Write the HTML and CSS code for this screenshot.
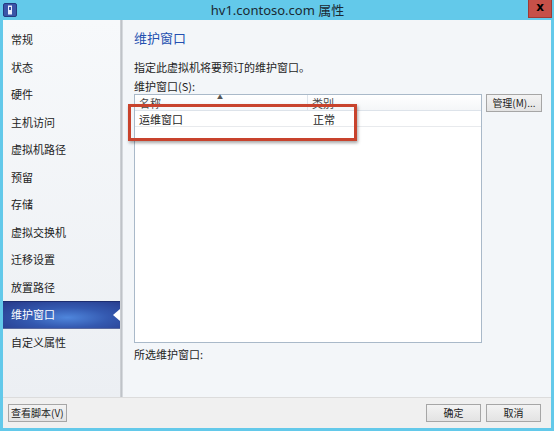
FILE: index.html
```html
<!DOCTYPE html>
<html lang="zh-CN">
<head>
  <meta charset="UTF-8" />
  <title>hv1.contoso.com 属性</title>
  <link rel="stylesheet" href="styles.css">
</head>
<body>
  <div class="window">
    <div class="titlebar">
      <svg class="app-icon" width="14" height="14" viewBox="0 0 14 14">
        <rect x="0.5" y="0.5" width="13" height="13" rx="1.5" fill="#3a55a8" stroke="#243a80" />
        <rect x="5" y="2.5" width="4" height="9" fill="#e8eefc" />
        <rect x="6" y="4" width="2" height="3" fill="#3a55a8" />
      </svg>
      <div class="title">hv1.contoso.com 属性</div>
      <div class="close">x</div>
    </div>

    <div class="main">
      <ul class="nav">
        <li>常规</li>
        <li>状态</li>
        <li>硬件</li>
        <li>主机访问</li>
        <li>虚拟机路径</li>
        <li>预留</li>
        <li>存储</li>
        <li>虚拟交换机</li>
        <li>迁移设置</li>
        <li>放置路径</li>
        <li class="active">维护窗口</li>
        <li>自定义属性</li>
      </ul>
      <div class="splitter"></div>
      <div class="content">
        <h1>维护窗口</h1>
        <p class="desc">指定此虚拟机将要预订的维护窗口。</p>
        <div class="label">维护窗口(S):</div>
        <div class="list-row">
          <div class="list">
            <div class="list-head">
              <div class="col-name">名称<span class="sort">▲</span></div>
              <div class="col-type">类别</div>
            </div>
            <div class="list-item">
              <div class="col-name">运维窗口</div>
              <div class="col-type">正常</div>
            </div>
          </div>
          <button class="btn manage">管理(M)...</button>
        </div>
        <div class="label selected">所选维护窗口:</div>
        <div class="highlight"></div>
      </div>
    </div>

    <div class="footer">
      <button class="btn">查看脚本(V)</button>
      <div class="footer-right">
        <button class="btn wide">确定</button>
        <button class="btn wide">取消</button>
      </div>
    </div>
  </div>
</body>
</html>
```

FILE: styles.css
```css
* {
  box-sizing: border-box;
}

body {
  margin: 0;
  font-family: "Noto Sans", "Noto Sans CJK SC", sans-serif;
  font-size: 11px;
  color: #1e1e1e;
}

.window {
  width: 554px;
  height: 431px;
  background: #63c9ea;
  display: flex;
  flex-direction: column;
}

.titlebar {
  height: 20px;
  display: flex;
  align-items: center;
  padding-left: 3px;
}

.app-icon {
  display: block;
}

.title {
  flex: 1;
  text-align: center;
  font-size: 13px;
  color: #1a2a33;
  padding-left: 10px;
  line-height: 20px;
}

.close {
  width: 24px;
  height: 18px;
  margin: 0 2px 2px 0;
  align-self: flex-start;
  background: #c65048;
  border: 1px solid #a03a34;
  border-top: none;
  color: #000;
  font-family: "DejaVu Sans", sans-serif;
  font-weight: bold;
  font-size: 12px;
  line-height: 15px;
  text-align: center;
}

.main {
  flex: 1;
  margin: 0 3px;
  display: flex;
  min-height: 0;
}

.nav {
  list-style: none;
  margin: 0;
  padding: 6px 0 0;
  width: 117px;
  background: linear-gradient(#f7f9fb, #eceff3);
}

.nav li {
  height: 27.5px;
  line-height: 27.5px;
  padding-left: 8px;
  font-family: "Noto Sans CJK SC", sans-serif;
  color: #222;
  position: relative;
}

.nav li.active {
  color: #fff;
  background: radial-gradient(ellipse at 55% 60%, #4f86dc 0%, #3459b0 45%, #26398a 100%);
  border-top: 1px solid #1c2d70;
  border-bottom: 1px solid #5a6aa0;
  line-height: 25.5px;
}

.nav li.active::after {
  content: "";
  position: absolute;
  right: 0;
  top: 7px;
  border-right: 7px solid #fff;
  border-top: 6px solid transparent;
  border-bottom: 6px solid transparent;
}

.splitter {
  width: 3px;
  background: linear-gradient(90deg, #d3d6da, #bfc3c8, #e1e4e8);
}

.content {
  flex: 1;
  background: #f3f6f9;
  padding: 9px 0 0 11px;
  position: relative;
  font-family: "Noto Sans CJK SC", sans-serif;
}

h1 {
  margin: 0;
  font-size: 13px;
  font-weight: normal;
  line-height: 18px;
  color: #2350b0;
}

.desc {
  margin: 13px 0 0;
  line-height: 15px;
}

.label {
  margin-top: 4px;
  line-height: 15px;
}

.list-row {
  display: flex;
  align-items: flex-start;
  gap: 4px;
}

.list {
  width: 348px;
  height: 249px;
  background: #fff;
  border: 1px solid #a9b9c9;
}

.list-head,
.list-item {
  display: flex;
  height: 16px;
  line-height: 16px;
}

.list-head {
  border-bottom: 1px solid #dde3ea;
  background: linear-gradient(#ffffff, #f4f6f8);
  color: #444;
}

.list-item {
  border-bottom: 1px solid #e8eaed;
}

.col-name {
  width: 173px;
  padding-left: 4px;
  position: relative;
}

.list-head .col-name {
  border-right: 1px solid #dde3ea;
}

.col-type {
  padding-left: 4px;
}

.list-item .col-type {
  padding-left: 5px;
}

.sort {
  position: absolute;
  left: 82px;
  top: -6px;
  font-size: 6px;
  color: #555;
}

.btn {
  font-family: "Noto Sans CJK SC", sans-serif;
  font-size: 10px;
  height: 18px;
  padding: 0 2px;
  line-height: 14px;
  white-space: nowrap;
  color: #222;
  background: linear-gradient(#f3f3f3, #e3e3e3);
  border: 1px solid #a6a6a6;
  border-radius: 0;
}

.manage {
  width: 56px;
}

.selected {
  margin-top: 4px;
}

.highlight {
  position: absolute;
  left: 5px;
  top: 84px;
  width: 229px;
  height: 37px;
  border: 3px solid #c8432d;
  box-shadow: 1px 2px 3px rgba(0, 0, 0, 0.35);
}

.footer {
  height: 31px;
  margin: 0 3px 3px;
  background: #f0f0f0;
  border-top: 1px solid #dcdcdc;
  display: flex;
  justify-content: space-between;
  padding: 6px 10px 0 5px;
}

.footer-right {
  display: flex;
  gap: 5px;
}

.wide {
  width: 55px;
}
```
